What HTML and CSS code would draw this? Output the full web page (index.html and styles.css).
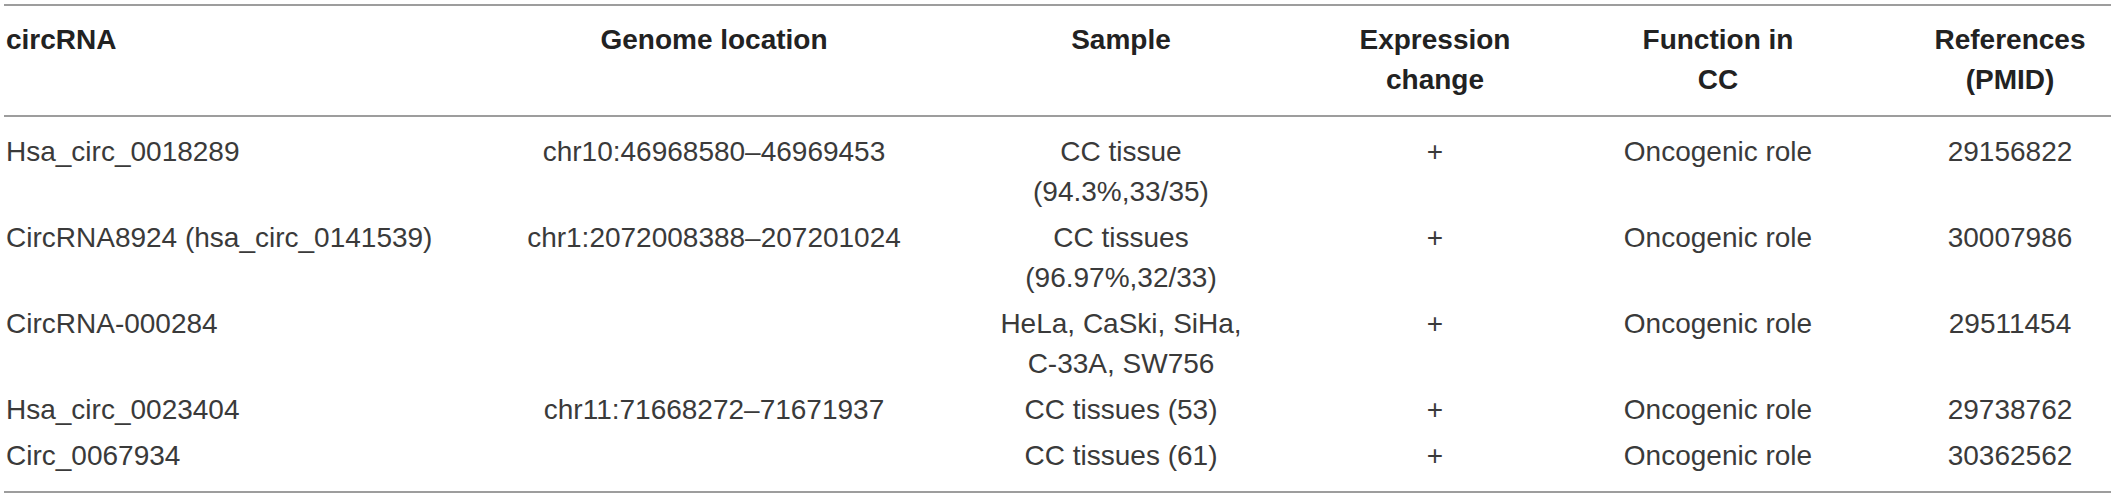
FILE: index.html
```html
<!DOCTYPE html>
<html lang="en">
<head>
<meta charset="utf-8">
<title>circRNAs in cervical cancer</title>
<link rel="stylesheet" href="styles.css">
</head>
<body>
<table class="data-table">
  <colgroup>
    <col class="c-name">
    <col class="c-loc">
    <col class="c-sample">
    <col class="c-expr">
    <col class="c-func">
    <col class="c-ref">
  </colgroup>
  <thead>
    <tr>
      <th class="left">circRNA</th>
      <th>Genome location</th>
      <th>Sample</th>
      <th>Expression<br>change</th>
      <th>Function in<br>CC</th>
      <th class="ref">References<br>(PMID)</th>
    </tr>
  </thead>
  <tbody>
    <tr>
      <td class="left">Hsa_circ_0018289</td>
      <td>chr10:46968580–46969453</td>
      <td>CC tissue<br>(94.3%,33/35)</td>
      <td>+</td>
      <td>Oncogenic role</td>
      <td class="ref">29156822</td>
    </tr>
    <tr>
      <td class="left">CircRNA8924 (hsa_circ_0141539)</td>
      <td>chr1:2072008388–207201024</td>
      <td>CC tissues<br>(96.97%,32/33)</td>
      <td>+</td>
      <td>Oncogenic role</td>
      <td class="ref">30007986</td>
    </tr>
    <tr>
      <td class="left">CircRNA-000284</td>
      <td></td>
      <td>HeLa, CaSki, SiHa,<br>C-33A, SW756</td>
      <td>+</td>
      <td>Oncogenic role</td>
      <td class="ref">29511454</td>
    </tr>
    <tr>
      <td class="left">Hsa_circ_0023404</td>
      <td>chr11:71668272–71671937</td>
      <td>CC tissues (53)</td>
      <td>+</td>
      <td>Oncogenic role</td>
      <td class="ref">29738762</td>
    </tr>
    <tr>
      <td class="left">Circ_0067934</td>
      <td></td>
      <td>CC tissues (61)</td>
      <td>+</td>
      <td>Oncogenic role</td>
      <td class="ref">30362562</td>
    </tr>
  </tbody>
</table>
</body>
</html>
```
FILE: styles.css
```css
html, body {
  margin: 0;
  padding: 0;
  background: #ffffff;
}

body {
  font-family: "Liberation Sans", Arial, sans-serif;
  font-size: 28px;
  line-height: 40px;
  color: #3a3a3a;
}

.data-table {
  width: 2107px;
  margin: 4px 0 0 4px;
  border-collapse: collapse;
  table-layout: fixed;
}

.c-name { width: 456px; }
.c-loc { width: 508px; }
.c-sample { width: 306px; }
.c-expr { width: 322px; }
.c-func { width: 244px; }
.c-ref { width: 271px; }

.data-table th,
.data-table td {
  text-align: center;
  vertical-align: top;
  white-space: nowrap;
  padding: 3px 0;
}

.data-table th {
  font-weight: bold;
  color: #222222;
  padding-top: 14px;
  padding-bottom: 15px;
  border-top: 2px solid #9d9d9d;
  border-bottom: 2px solid #9d9d9d;
}

.data-table .left {
  text-align: left;
  padding-left: 2px;
}

.data-table .ref {
  padding-left: 69px;
}

.data-table tbody tr:first-child td {
  padding-top: 15px;
}

.data-table tbody tr:last-child td {
  padding-bottom: 15px;
  border-bottom: 2px solid #9d9d9d;
}
```
